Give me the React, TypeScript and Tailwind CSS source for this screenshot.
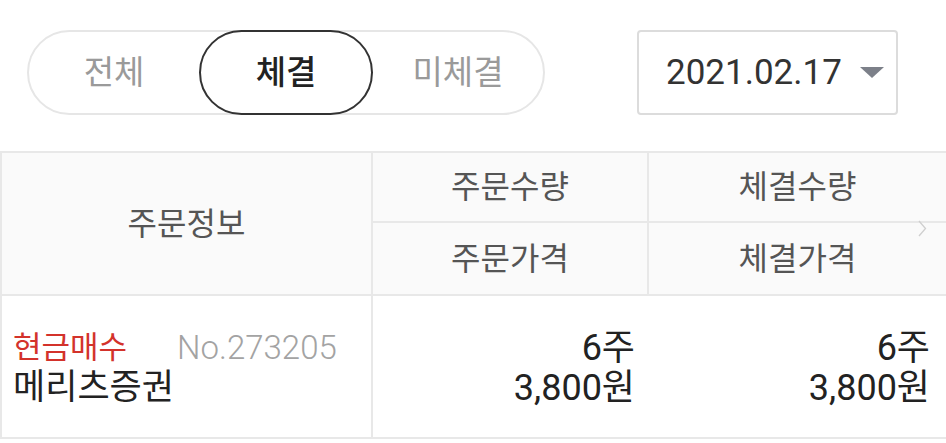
import React from 'react';

const font = { fontFamily: 'Roboto, "Noto Sans CJK KR", sans-serif' };

function Segment() {
  const tabs = ['전체', '체결', '미체결'];
  const active = 1;
  return (
    <div className="flex w-[518px] h-[85px] rounded-full border-2 border-[#e6e6e6]">
      {tabs.map((t, i) =>
        i === active ? (
          <div
            key={t}
            className="flex-1 -my-[2px] flex items-center justify-center rounded-full border-[2.5px] border-[#333333] text-[33px] font-medium text-[#222222]"
          >
            {t}
          </div>
        ) : (
          <div key={t} className="flex-1 flex items-center justify-center text-[33px] text-[#9a9a9a]">
            {t}
          </div>
        )
      )}
    </div>
  );
}

function DatePicker() {
  return (
    <div className="flex items-center w-[261px] h-[85px] rounded-[4px] border-2 border-[#dcdcdc] pl-[27px] pr-[12px]">
      <span className="text-[35px] leading-none text-[#333333]">2021.02.17</span>
      <svg className="ml-auto" width="24" height="12" viewBox="0 0 24 12">
        <path d="M0 0 H24 L12 11 Z" fill="#7c8089" />
      </svg>
    </div>
  );
}

export default function App() {
  return (
    <div className="relative w-[946px] h-[443px] overflow-hidden bg-white" style={font}>
      <div className="flex items-center justify-between pl-[27px] pr-[48px] pt-[30px]">
        <Segment />
        <DatePicker />
      </div>

      <div className="mt-[36px] border-t-2 border-l-2 border-[#e8e8e8]">
        {/* header */}
        <div className="flex bg-[#fafafa] border-b-2 border-[#e8e8e8] text-[32px] text-[#555555]">
          <div className="w-[371px] border-r-2 border-[#e8e8e8] flex items-center justify-center">
            주문정보
          </div>
          <div className="flex-1 flex flex-col">
            <div className="flex h-[70px] border-b-2 border-[#e8e8e8]">
              <div className="w-[276px] border-r-2 border-[#e8e8e8] flex items-center justify-center">
                주문수량
              </div>
              <div className="flex-1 flex items-center justify-center">체결수량</div>
            </div>
            <div className="flex h-[71px]">
              <div className="w-[276px] border-r-2 border-[#e8e8e8] flex items-center justify-center">
                주문가격
              </div>
              <div className="flex-1 flex items-center justify-center">체결가격</div>
            </div>
          </div>
        </div>

        {/* body row */}
        <div className="flex h-[143px] border-b-2 border-[#e8e8e8]">
          <div className="w-[371px] border-r-2 border-[#e8e8e8] pl-[11px] pt-[2px] flex flex-col justify-center leading-[40px]">
            <div className="flex items-center">
              <span className="text-[31px] text-[#d3322b]">현금매수</span>
              <span className="ml-[50px] text-[33px] text-[#a3a3a3] font-light">No.273205</span>
            </div>
            <div className="text-[35px] text-[#222222]">메리츠증권</div>
          </div>
          <div className="flex-1 flex">
            <div className="w-[276px] pr-[14px] pt-[2px] flex flex-col justify-center items-end text-[36px] text-[#222222]">
              <div className="leading-[40px]">6주</div>
              <div className="leading-[40px]">3,800원</div>
            </div>
            <div className="flex-1 pr-[16px] pt-[2px] flex flex-col justify-center items-end text-[36px] text-[#222222]">
              <div className="leading-[40px]">6주</div>
              <div className="leading-[40px]">3,800원</div>
            </div>
          </div>
        </div>
      </div>

      <svg className="absolute left-[918px] top-[220px]" width="9" height="17" viewBox="0 0 9 17">
        <path d="M1 1 L7.5 8.5 L1 16" fill="none" stroke="#cfcfcf" strokeWidth="1.3" />
      </svg>
    </div>
  );
}
